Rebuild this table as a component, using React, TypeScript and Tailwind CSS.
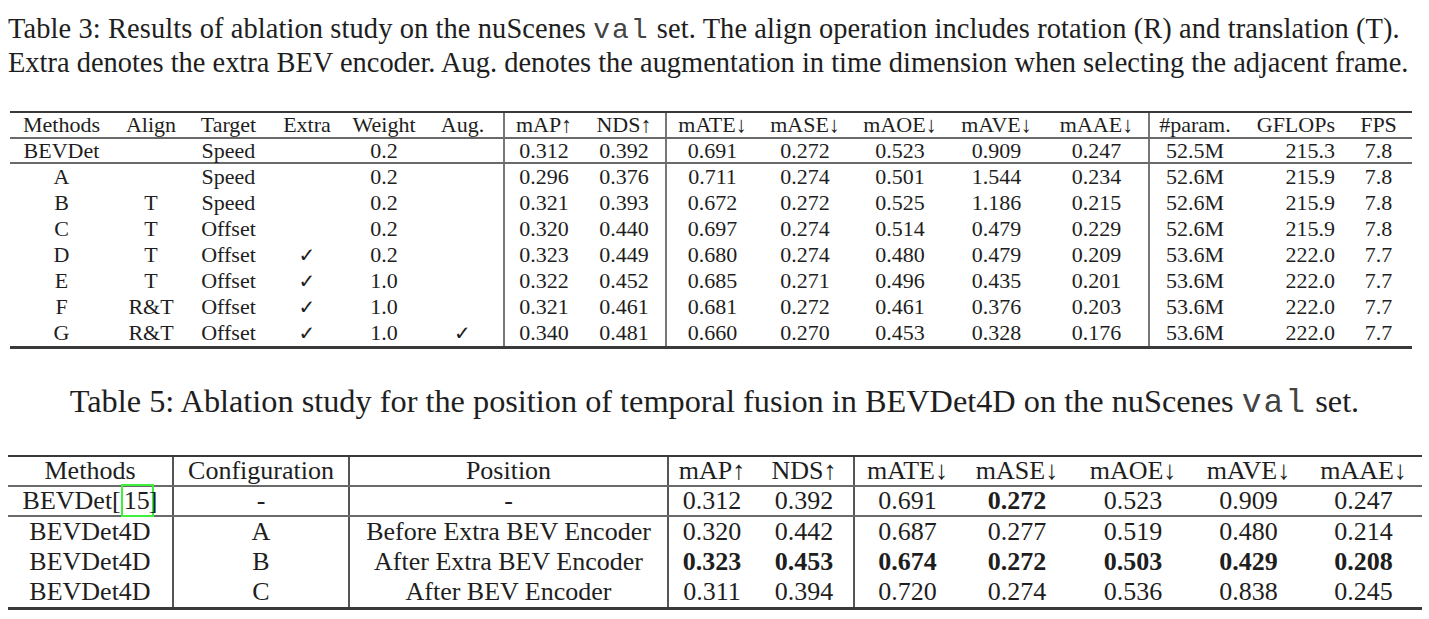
import React from "react";

const serif = { fontFamily: '"Liberation Serif", "Times New Roman", serif' };
const mono = { fontFamily: '"Liberation Mono", "Courier New", monospace' };

const t3Cols = [
  { w: "w-[103px]" },
  { w: "w-[76px]" },
  { w: "w-[79px]" },
  { w: "w-[78px]" },
  { w: "w-[76px]" },
  { w: "w-[81px]" },
  { w: "w-[80px]", line: true },
  { w: "w-[82px]" },
  { w: "w-[93px]", line: true },
  { w: "w-[94px]" },
  { w: "w-[96px]" },
  { w: "w-[97px]" },
  { w: "w-[103px]" },
  { w: "w-[92px]", line: true },
  { w: "w-[105px]", align: "text-right pr-[10px]" },
  { w: "w-[67px]" },
];

const t3Head = ["Methods", "Align", "Target", "Extra", "Weight", "Aug.", "mAP↑", "NDS↑", "mATE↓", "mASE↓", "mAOE↓", "mAVE↓", "mAAE↓", "#param.", "GFLOPs", "FPS"];

const t3Base = ["BEVDet", "", "Speed", "", "0.2", "", "0.312", "0.392", "0.691", "0.272", "0.523", "0.909", "0.247", "52.5M", "215.3", "7.8"];

const t3Rows = [
  ["A", "", "Speed", "", "0.2", "", "0.296", "0.376", "0.711", "0.274", "0.501", "1.544", "0.234", "52.6M", "215.9", "7.8"],
  ["B", "T", "Speed", "", "0.2", "", "0.321", "0.393", "0.672", "0.272", "0.525", "1.186", "0.215", "52.6M", "215.9", "7.8"],
  ["C", "T", "Offset", "", "0.2", "", "0.320", "0.440", "0.697", "0.274", "0.514", "0.479", "0.229", "52.6M", "215.9", "7.8"],
  ["D", "T", "Offset", "✓", "0.2", "", "0.323", "0.449", "0.680", "0.274", "0.480", "0.479", "0.209", "53.6M", "222.0", "7.7"],
  ["E", "T", "Offset", "✓", "1.0", "", "0.322", "0.452", "0.685", "0.271", "0.496", "0.435", "0.201", "53.6M", "222.0", "7.7"],
  ["F", "R&T", "Offset", "✓", "1.0", "", "0.321", "0.461", "0.681", "0.272", "0.461", "0.376", "0.203", "53.6M", "222.0", "7.7"],
  ["G", "R&T", "Offset", "✓", "1.0", "✓", "0.340", "0.481", "0.660", "0.270", "0.453", "0.328", "0.176", "53.6M", "222.0", "7.7"],
];

const t5Cols = [
  { w: "w-[164px]" },
  { w: "w-[176px]", line: true },
  { w: "w-[319px]", line: true },
  { w: "w-[88px]", line: true },
  { w: "w-[98px]" },
  { w: "w-[107px]", line: true },
  { w: "w-[114px]" },
  { w: "w-[118px]" },
  { w: "w-[113px]" },
  { w: "w-[117px]" },
];

const t5Head = ["Methods", "Configuration", "Position", "mAP↑", "NDS↑", "mATE↓", "mASE↓", "mAOE↓", "mAVE↓", "mAAE↓"];

const t5Rows: { cells: React.ReactNode[]; bold: number[] }[] = [
  {
    cells: [
      <span>
        BEVDet[<span className="border-2 border-[#3cf03c] pl-[1px] pr-[2px]">15</span>
        <span className="-ml-[5px]">]</span>
      </span>,
      "-", "-", "0.312", "0.392", "0.691", "0.272", "0.523", "0.909", "0.247",
    ],
    bold: [6],
  },
  { cells: ["BEVDet4D", "A", "Before Extra BEV Encoder", "0.320", "0.442", "0.687", "0.277", "0.519", "0.480", "0.214"], bold: [] },
  { cells: ["BEVDet4D", "B", "After Extra BEV Encoder", "0.323", "0.453", "0.674", "0.272", "0.503", "0.429", "0.208"], bold: [3, 4, 5, 6, 7, 8, 9] },
  { cells: ["BEVDet4D", "C", "After BEV Encoder", "0.311", "0.394", "0.720", "0.274", "0.536", "0.838", "0.245"], bold: [] },
];

function Row3({ cells, h, rule }: { cells: string[]; h: string; rule?: boolean }) {
  return (
    <div className={`flex ${h} ${rule ? "border-b-2 border-[#6a6a6a]" : ""}`}>
      {cells.map((c, i) => {
        const col = t3Cols[i];
        return (
          <div
            key={i}
            className={`${col.w} shrink-0 flex items-center ${col.align ? "justify-end " + col.align : "justify-center"} ${col.line ? "border-l-2 border-[#777]" : ""} ${c === "✓" ? "text-[20px]" : ""}`}
            style={c === "✓" ? { fontFamily: '"DejaVu Sans", sans-serif' } : undefined}
          >
            {c}
          </div>
        );
      })}
    </div>
  );
}

function Row5({ cells, bold, h, rule }: { cells: React.ReactNode[]; bold: number[]; h: string; rule?: boolean }) {
  return (
    <div className={`flex ${h} ${rule ? "border-b-2 border-[#6a6a6a]" : ""}`}>
      {cells.map((c, i) => {
        const col = t5Cols[i];
        return (
          <div
            key={i}
            className={`${col.w} shrink-0 flex items-center justify-center ${col.line ? "border-l-2 border-[#555]" : ""} ${bold.includes(i) ? "font-bold" : ""}`}
          >
            {c}
          </div>
        );
      })}
    </div>
  );
}

export default function App() {
  return (
    <div className="w-[1429px] h-[619px] bg-white text-[#1e1e1e] overflow-hidden" style={serif}>
      <div className="pt-[13px] pl-[8px] text-[28.45px] leading-[32px] whitespace-nowrap">
        <div className="tracking-[0.1px]">
          Table 3: Results of ablation study on the nuScenes <span className="text-[28px] tracking-[2px] text-[#444]" style={mono}>val</span> set. The align operation includes rotation (R) and translation (T).
        </div>
        <div>Extra denotes the extra BEV encoder. Aug. denotes the augmentation in time dimension when selecting the adjacent frame.</div>
      </div>

      <div className="mt-[32px] ml-[10px] w-[1402px] border-t-2 border-b-[3px] border-[#3a3a3a] text-[22px] leading-none">
        <Row3 cells={t3Head} h="h-[26px]" rule />
        <Row3 cells={t3Base} h="h-[25px]" rule />
        {t3Rows.map((r, i) => (
          <Row3 key={i} cells={r} h="h-[26px]" />
        ))}
      </div>

      <div className="mt-[34px] text-center text-[32.3px] leading-[36px] whitespace-nowrap">
        Table 5: Ablation study for the position of temporal fusion in BEVDet4D on the nuScenes <span className="text-[33px] tracking-[2px] text-[#444]" style={mono}>val</span> set.
      </div>

      <div className="mt-[33px] ml-[8px] w-[1414px] border-t-2 border-b-[3px] border-[#3a3a3a] text-[26px] leading-none">
        <Row5 cells={t5Head} bold={[]} h="h-[30px]" rule />
        <Row5 cells={t5Rows[0].cells} bold={t5Rows[0].bold} h="h-[30px]" rule />
        {t5Rows.slice(1).map((r, i) => (
          <Row5 key={i} cells={r.cells} bold={r.bold} h="h-[30px]" />
        ))}
      </div>
    </div>
  );
}
